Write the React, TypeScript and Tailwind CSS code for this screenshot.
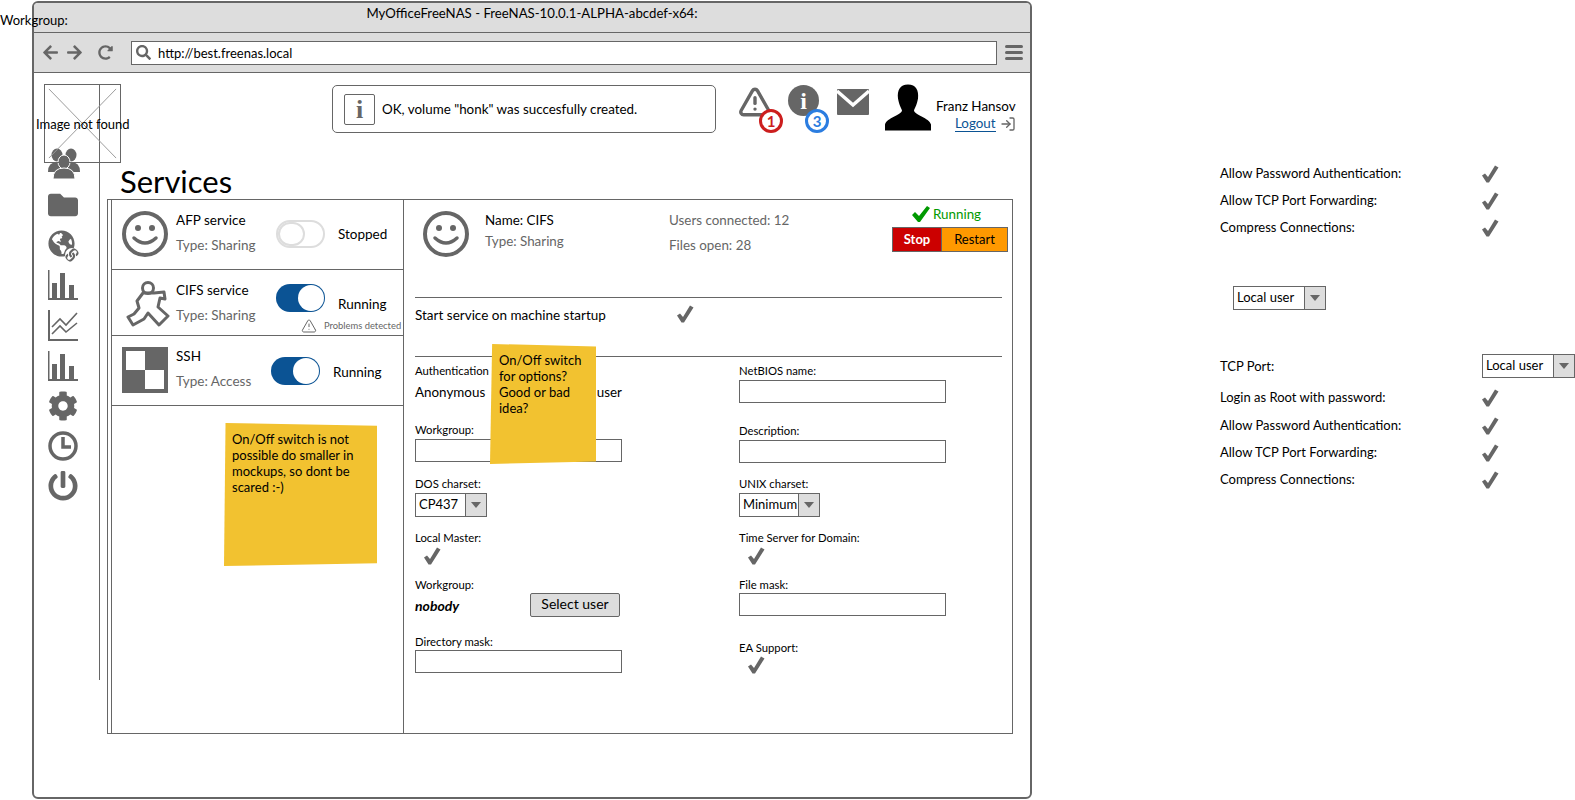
import { ReactNode } from "react";
import { TriangleAlert, LogIn } from "lucide-react";
import { FaArrowLeft, FaArrowRight, FaCog, FaFolder, FaGlobeAmericas, FaLink, FaPowerOff, FaRedoAlt, FaSearch } from "react-icons/fa";

const GRAY = "#666666";

function Check({ className = "" }: { className?: string }) {
  return (
    <svg viewBox="0 0 18 18" className={`h-[18px] w-[18px] ${className}`}>
      <path d="M1 10.5 L4 8.5 L7 12 L14 0.5 L17.5 2.5 L8 17.5 L5.5 17.5 Z" fill={GRAY} />
    </svg>
  );
}

function Smiley() {
  return (
    <svg viewBox="0 0 46 46" className="h-[46px] w-[46px] shrink-0">
      <circle cx="23" cy="23" r="21" fill="none" stroke={GRAY} strokeWidth="4" />
      <circle cx="16" cy="17" r="3" fill={GRAY} />
      <circle cx="30" cy="17" r="3" fill={GRAY} />
      <path d="M12 27 Q23 37 34 27" fill="none" stroke={GRAY} strokeWidth="3.5" strokeLinecap="round" />
    </svg>
  );
}

function Runner() {
  return (
    <svg viewBox="0 0 50 46" className="h-[46px] w-[50px] shrink-0 -mr-[4px]">
      <circle cx="26" cy="7" r="5.5" fill="none" stroke={GRAY} strokeWidth="3" />
      <path
        d="M21 12 L15 20 L17 27 L12 33 L6 36 L11 44 L22 38 L26 32 L37 44 L46 35 L36 26 L38 17 L43 18 L42 11 L32 12 Z"
        fill="none"
        stroke={GRAY}
        strokeWidth="3"
        strokeLinejoin="round"
      />
    </svg>
  );
}

function Checker() {
  return (
    <svg viewBox="0 0 46 46" className="h-[46px] w-[46px] shrink-0">
      <rect width="46" height="46" fill={GRAY} />
      <rect x="4" y="4" width="19" height="19" fill="#fff" />
      <rect x="23" y="23" width="19" height="19" fill="#fff" />
    </svg>
  );
}

function Users() {
  return (
    <svg viewBox="0 0 32 32" className="h-[32px] w-[32px]" fill={GRAY}>
      <ellipse cx="9" cy="7" rx="5.5" ry="6.5" />
      <ellipse cx="23" cy="7" rx="5.5" ry="6.5" />
      <path d="M0 24 Q0 14 9 14 Q18 14 18 24 Z" />
      <path d="M14 24 Q14 14 23 14 Q32 14 32 24 Z" />
      <ellipse cx="16" cy="14" rx="6" ry="7" stroke="#fff" strokeWidth="1" />
      <path d="M5 31 Q5 20 16 20 Q27 20 27 31 Z" stroke="#fff" strokeWidth="1" />
    </svg>
  );
}

function Bars() {
  return (
    <svg viewBox="0 0 30 30" className="h-[30px] w-[30px]" fill={GRAY}>
      <rect x="0" y="0" width="1.5" height="30" />
      <rect x="0" y="28" width="30" height="2" />
      <rect x="4" y="13" width="5" height="15" />
      <rect x="12" y="3" width="5" height="25" />
      <rect x="21" y="15" width="5" height="13" />
    </svg>
  );
}

function Lines() {
  return (
    <svg viewBox="0 0 30 31" className="h-[31px] w-[30px]" fill="none" stroke={GRAY}>
      <path d="M1 0 V30 H30" strokeWidth="2" />
      <path d="M4 17 L12 9 L18 15 L29 3" strokeWidth="1.6" />
      <path d="M4 24 L12 16 L18 22 L29 13" strokeWidth="1.6" />
    </svg>
  );
}

function Clock() {
  return (
    <svg viewBox="0 0 30 30" className="h-[30px] w-[30px]" fill="none" stroke={GRAY}>
      <circle cx="15" cy="15" r="13" strokeWidth="3.5" />
      <path d="M15 6 V16 H23" strokeWidth="3.5" />
    </svg>
  );
}

function Globe() {
  return (
    <div className="relative h-[30px] w-[30px]">
      <FaGlobeAmericas size={27} color={GRAY} />
      <FaLink size={14} color={GRAY} className="absolute right-[-1px] bottom-[-2px] rounded-full bg-white" />
    </div>
  );
}

function Toggle({ on }: { on: boolean }) {
  return on ? (
    <div className="flex h-[28px] w-[49px] shrink-0 items-center justify-end rounded-full bg-[#0b5394] pr-[1px]">
      <div className="h-[26px] w-[26px] rounded-full bg-white" />
    </div>
  ) : (
    <div className="h-[28px] w-[49px] shrink-0 rounded-full border-[2px] border-[#dddddd] bg-white">
      <div className="h-[24px] w-[27px] rounded-full border-[2px] border-[#dddddd]" />
    </div>
  );
}

function Arrow() {
  return (
    <div className="flex w-[21px] shrink-0 items-center justify-center self-stretch border-l border-[#666666] bg-[#dddddd]">
      <svg viewBox="0 0 10 6" className="h-[6px] w-[10px]">
        <path d="M0 0 H10 L5 6 Z" fill={GRAY} />
      </svg>
    </div>
  );
}

function Select({ label, className }: { label: string; className: string }) {
  return (
    <div className={`flex h-[24px] items-center border border-[#666666] bg-white text-[13px] text-black ${className}`}>
      <span className="flex-1 pl-[3px]">{label}</span>
      <Arrow />
    </div>
  );
}

function Label({ children, className = "" }: { children: ReactNode; className?: string }) {
  return <div className={`h-[14px] text-[11.3px] leading-[14px] text-black ${className}`}>{children}</div>;
}

function Input({ className = "" }: { className?: string }) {
  return <div className={`h-[23px] w-[207px] border border-[#666666] bg-white ${className}`} />;
}

function ServiceRow({
  icon,
  name,
  type,
  on,
  status,
  height,
  toggleBox,
  statusTop,
  children,
}: {
  icon: ReactNode;
  name: string;
  type: string;
  on: boolean;
  status: string;
  height: string;
  toggleBox: string;
  statusTop: string;
  children?: ReactNode;
}) {
  return (
    <div className={`flex border-b border-[#666666] pl-[10px] pt-[11px] ${height}`}>
      {icon}
      <div className="ml-[8px] w-[95px] shrink-0">
        <div className="text-[13.5px] leading-[18px] text-black">{name}</div>
        <div className="mt-[7px] text-[13.5px] leading-[18px] text-[#666666]">{type}</div>
      </div>
      <div className={`flex flex-col ${toggleBox}`}>
        <div className="flex">
          <Toggle on={on} />
          <div className={`ml-[13px] text-[13.5px] leading-[18px] text-black ${statusTop}`}>{status}</div>
        </div>
        {children}
      </div>
    </div>
  );
}

function SideRow({ label, top = "" }: { label: string; top?: string }) {
  return (
    <div className={`flex h-[27px] items-center ${top}`}>
      <span className="w-[261px] text-[13px] text-black">{label}</span>
      <Check />
    </div>
  );
}

export default function App() {
  return (
    <div
      className="relative flex h-[800px] w-[1575px] overflow-hidden bg-white text-black"
      style={{ fontFamily: "Lato, 'Noto Sans', sans-serif" }}
    >
      {/* browser window */}
      <div className="ml-[32px] mt-[1px] flex h-[798px] w-[1000px] shrink-0 flex-col rounded-[6px] border-2 border-[#666666] bg-white">
        <div className="h-[30px] rounded-t-[4px] border-b border-[#666666] bg-[#dddddd] pt-[1px] text-center text-[13.2px] leading-[18px]">
          MyOfficeFreeNAS - FreeNAS-10.0.1-ALPHA-abcdef-x64:
        </div>
        <div className="flex h-[40px] items-center border-b border-[#666666] bg-[#dddddd] pl-[8px] pr-[6px]">
          <FaArrowLeft size={17} color={GRAY} />
          <FaArrowRight size={17} color={GRAY} className="ml-[7px]" />
          <FaRedoAlt size={15} color={GRAY} className="ml-[15px]" />
          <div className="ml-[18px] flex h-[24px] w-[866px] items-center border border-[#666666] bg-white pl-[4px] text-[13px]">
            <FaSearch size={15} color={GRAY} />
            <span className="ml-[7px] pt-[2px]">http://best.freenas.local</span>
          </div>
          <div className="ml-[8px] flex w-[18px] flex-col gap-[3px]">
            <div className="h-[3px] rounded bg-[#666666]" />
            <div className="h-[3px] rounded bg-[#666666]" />
            <div className="h-[3px] rounded bg-[#666666]" />
          </div>
        </div>

        <div className="flex flex-1">
          {/* sidebar */}
          <div className="mt-[11px] flex h-[596px] w-[66px] shrink-0 flex-col items-start gap-[10px] border-r border-[#666666] pl-[14px] pt-[64px]">
            <Users />
            <FaFolder size={30} color={GRAY} />
            <Globe />
            <Bars />
            <Lines />
            <Bars />
            <FaCog size={30} color={GRAY} />
            <Clock />
            <FaPowerOff size={30} color={GRAY} />
          </div>

          <div className="flex-1">
            {/* header */}
            <div className="flex h-[89px] pt-[12px]">
              <div className="ml-[232px] flex h-[48px] w-[384px] items-center rounded-[5px] border border-[#666666] pl-[11px] pt-[1px] text-[13.4px]">
                <div className="flex h-[31px] w-[31px] items-center justify-center rounded-[2px] border border-[#666666] text-[26px] font-bold leading-none text-[#666666]" style={{ fontFamily: "'Liberation Serif', serif" }}>
                  i
                </div>
                <span className="ml-[7px]">OK, volume "honk" was succesfully created.</span>
              </div>
              <div className="relative ml-[23px] h-[48px] w-[32px]">
                <TriangleAlert size={34} strokeWidth={2.4} color={GRAY} className="-ml-[1px]" />
                <div className="absolute left-[20px] top-[24px] flex h-[24px] w-[24px] items-center justify-center rounded-full border-[3px] border-[#cc1e1e] bg-white text-[15px] font-bold text-[#cc1e1e]">
                  1
                </div>
              </div>
              <div className="relative ml-[17px] h-[48px] w-[31px]">
                <div className="flex h-[31px] w-[31px] items-center justify-center rounded-full bg-[#666666] text-[24px] font-bold text-white" style={{ fontFamily: "'Liberation Serif', serif" }}>
                  i
                </div>
                <div className="absolute left-[17px] top-[24px] flex h-[24px] w-[24px] items-center justify-center rounded-full border-[3px] border-[#2b7de0] bg-white text-[15px] font-bold text-[#2b7de0]">
                  3
                </div>
              </div>
              <svg viewBox="0 0 32 26" className="ml-[18px] mt-[4px] h-[26px] w-[32px]">
                <rect width="32" height="26" rx="1" fill={GRAY} />
                <path d="M0 2 L16 16 L32 2" fill="none" stroke="#fff" strokeWidth="3.5" />
              </svg>
              <svg viewBox="0 0 46 46" className="ml-[16px] -mt-[1px] h-[47px] w-[46px]">
                <path d="M23 0 C31 0 34 6 33 14 C32 20 30 23 29 26 C30 31 44 33 46 40 L46 46 L0 46 L0 40 C2 33 16 31 17 26 C16 23 14 20 13 14 C12 6 15 0 23 0 Z" fill="#000" />
              </svg>
              <div className="ml-[5px] flex flex-col items-end pt-[12px] text-[13.4px] leading-[18px]">
                <div className="text-black">Franz Hansov</div>
                <div className="mt-[1px] flex items-center">
                  <span className="border-b border-[#0b5394] leading-[15px] text-[#0b5394]">Logout</span>
                  <LogIn size={16} strokeWidth={2} color={GRAY} className="ml-[4px]" />
                </div>
              </div>
            </div>

            <div className="ml-[20px] h-[37px] text-[31px] leading-[39px] text-black">Services</div>

            {/* services panel */}
            <div className="ml-[7px] flex h-[535px] w-[906px] border border-[#666666] pl-[3px]">
              <div className="w-[293px] shrink-0 border-x border-[#666666]">
                <ServiceRow
                  icon={<Smiley />}
                  name="AFP service"
                  type="Type: Sharing"
                  on={false}
                  status="Stopped"
                  height="h-[70px]"
                  toggleBox="ml-[5px] pt-[9px]"
                  statusTop="mt-[5px]"
                />
                <ServiceRow
                  icon={<Runner />}
                  name="CIFS service"
                  type="Type: Sharing"
                  on
                  status="Running"
                  height="h-[66px]"
                  toggleBox="ml-[5px] pt-[3px]"
                  statusTop="mt-[11px]"
                >
                  <div className="ml-[25px] mt-[5px] flex items-center">
                    <TriangleAlert size={16} strokeWidth={1.5} color={GRAY} />
                    <span className="ml-[7px] whitespace-nowrap text-[9.4px] text-[#666666]">Problems detected</span>
                  </div>
                </ServiceRow>
                <ServiceRow
                  icon={<Checker />}
                  name="SSH"
                  type="Type: Access"
                  on
                  status="Running"
                  height="h-[70px]"
                  toggleBox="pt-[10px]"
                  statusTop="mt-[6px]"
                />
              </div>

              {/* detail pane */}
              <div className="w-[598px] shrink-0 pl-[11px]">
                <div className="flex h-[98px] border-b border-[#666666] pt-[11px]">
                  <div className="ml-[8px] shrink-0">
                    <Smiley />
                  </div>
                  <div className="ml-[16px] w-[184px] shrink-0 text-[13.4px]">
                    <div className="leading-[18px] text-black">Name: CIFS</div>
                    <div className="mt-[3px] leading-[18px] text-[#666666]">Type: Sharing</div>
                  </div>
                  <div className="w-[222px] shrink-0 text-[13.4px] text-[#666666]">
                    <div className="leading-[18px]">Users connected: 12</div>
                    <div className="mt-[7px] leading-[18px]">Files open: 28</div>
                  </div>
                  <div className="-mt-[7px] flex shrink-0 flex-col items-center">
                    <div className="mr-[6px] flex items-center text-[13.4px] text-[#009900]">
                      <svg viewBox="0 0 18 18" className="h-[18px] w-[18px]">
                        <path d="M0 10 L3 7 L7 11 L15 1 L18 3 L8 17 L6 17 Z" fill="#009900" />
                      </svg>
                      <span className="ml-[3px]">Running</span>
                    </div>
                    <div className="mt-[3px] flex pl-[1px]">
                      <div className="flex h-[25px] w-[50px] items-center justify-center border border-[#666666] bg-[#cc0000] text-[13px] font-bold text-white">Stop</div>
                      <div className="flex h-[25px] w-[66px] items-center justify-center border border-l-0 border-[#666666] bg-[#ff9900] text-[13px] text-black">Restart</div>
                    </div>
                  </div>
                </div>

                <div className="flex h-[59px] items-start border-b border-[#666666] pt-[7px]">
                  <span className="mt-[1px] w-[261px] text-[13.5px] leading-[18px]">Start service on machine startup</span>
                  <Check />
                </div>

                <div className="flex">
                  <div className="flex w-[324px] flex-col items-start pt-[7px]">
                    <Label>Authentication Method:</Label>
                    <div className="mt-[5px] flex h-[18px] w-[207px] justify-between text-[13.4px] leading-[18px]">
                      <span>Anonymous</span>
                      <span>Local user</span>
                    </div>
                    <Label className="mt-[22px]">Workgroup:</Label>
                    <Input className="mt-[2px]" />
                    <Label className="mt-[15px]">DOS charset:</Label>
                    <Select label="CP437" className="mt-[2px] w-[72px]" />
                    <Label className="mt-[14px]">Local Master:</Label>
                    <Check className="ml-[8px] mt-[2px]" />
                    <Label className="mt-[13px]">Workgroup:</Label>
                    <div className="mt-[1px] flex h-[24px] w-[205px] items-center justify-between">
                      <span className="text-[14px] font-bold italic">nobody</span>
                      <div className="flex h-[24px] w-[90px] items-center justify-center rounded-[2px] border border-[#666666] bg-[#dddddd] pb-[3px] text-[14px]">Select user</div>
                    </div>
                    <Label className="mt-[18px]">Directory mask:</Label>
                    <Input className="mt-[1px]" />
                  </div>
                  <div className="flex flex-col items-start pt-[7px]">
                    <Label>NetBIOS name:</Label>
                    <Input className="mt-[2px]" />
                    <Label className="mt-[21px]">Description:</Label>
                    <Input className="mt-[2px]" />
                    <Label className="mt-[14px]">UNIX charset:</Label>
                    <Select label="Minimum" className="mt-[2px] w-[81px]" />
                    <Label className="mt-[14px]">Time Server for Domain:</Label>
                    <Check className="ml-[8px] mt-[2px]" />
                    <Label className="mt-[13px]">File mask:</Label>
                    <Input className="mt-[1px]" />
                    <Label className="mt-[25px]">EA Support:</Label>
                    <Check className="ml-[8px] mt-[1px]" />
                  </div>
                </div>
              </div>
            </div>
          </div>
        </div>
      </div>

      {/* loose widgets on the right of the canvas */}
      <div className="ml-[188px] flex w-[355px] shrink-0 flex-col items-start pt-[160px]">
        <SideRow label="Allow Password Authentication:" />
        <SideRow label="Allow TCP Port Forwarding:" />
        <SideRow label="Compress Connections:" />
        <Select label="Local user" className="ml-[13px] mt-[45px] w-[93px]" />
        <div className="mt-[43px] flex h-[25px] items-center">
          <span className="w-[262px] pt-[2px] text-[13px]">TCP Port:</span>
          <Select label="Local user" className="w-[93px]" />
        </div>
        <SideRow label="Login as Root with password:" top="mt-[6px]" />
        <SideRow label="Allow Password Authentication:" top="mt-[1px]" />
        <SideRow label="Allow TCP Port Forwarding:" />
        <SideRow label="Compress Connections:" />
      </div>

      {/* stray labels and sticky notes lying over the mockup */}
      <div className="absolute left-0 top-[11px] text-[13px] leading-[18px]">Workgroup:</div>
      <div className="absolute left-[44px] top-[84px] h-[79px] w-[77px] border border-[#666666]">
        <svg viewBox="0 0 77 79" className="h-full w-full">
          <path d="M4 4 L73 75 M73 4 L4 75" stroke="#999999" strokeWidth="1" />
        </svg>
      </div>
      <div className="absolute left-[36px] top-[115px] text-[13px] leading-[18px]">Image not found</div>
      <div className="absolute left-[224px] top-[423px] h-[143px] w-[153px] bg-[#f2c230] pl-[8px] pt-[8px] text-[13px] leading-[16px] [clip-path:polygon(1%_0,100%_2%,100%_98%,0_100%)]">
        On/Off switch is not possible do smaller in mockups, so dont be scared :-)
      </div>
      <div className="absolute left-[490px] top-[344px] h-[120px] w-[106px] bg-[#f2c230] pl-[9px] pt-[8px] text-[13px] leading-[16px] [clip-path:polygon(2%_0,100%_2%,100%_98%,0_100%)]">
        On/Off switch for options? Good or bad idea?
      </div>
    </div>
  );
}
